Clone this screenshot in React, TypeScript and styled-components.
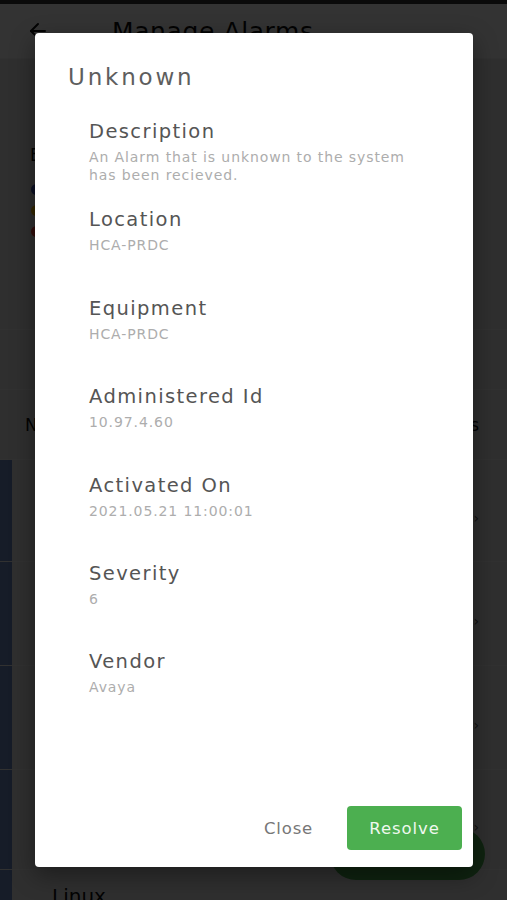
import { ArrowLeft } from "lucide-react";
import styled, { createGlobalStyle } from "styled-components";

const GlobalStyle = createGlobalStyle`
  html, body {
    margin: 0;
    padding: 0;
    background: #0a0a0a;
  }
  body {
    font-family: "DejaVu Sans", "Noto Sans", sans-serif;
  }
`;

const Screen = styled.div`
  position: relative;
  width: 507px;
  height: 900px;
  overflow: hidden;
  background: #ececec;
`;

const StatusStrip = styled.div`
  height: 4px;
  background: #333;
`;

const Header = styled.header`
  height: 54px;
  background: #fff;
  border-bottom: 1px solid #f6f6f6;
  display: flex;
  align-items: center;
  gap: 62px;
  padding-left: 26px;
  color: #111;
`;

const HeaderTitle = styled.h1`
  margin: 0;
  font-size: 25px;
  font-weight: 400;
  letter-spacing: 0.6px;
`;

const Summary = styled.section`
  height: 271px;
  border-bottom: 1px solid #f6f6f6;
  padding: 86px 0 0 30px;
  box-sizing: border-box;
  color: #111;
`;

const SummaryTitle = styled.div`
  font-size: 17px;
  margin-bottom: 17px;
`;

const Legend = styled.ul`
  list-style: none;
  margin: 0;
  padding: 0 0 0 1px;
  display: flex;
  flex-direction: column;
  gap: 6px;
`;

const LegendItem = styled.li`
  display: flex;
  align-items: center;
  gap: 8px;
  font-size: 13px;
`;

const Dot = styled.span<{ $color: string }>`
  width: 11px;
  height: 11px;
  border-radius: 50%;
  background: ${(p) => p.$color};
`;

const Filters = styled.div`
  height: 59px;
  border-bottom: 1px solid #f6f6f6;
`;

const TableHead = styled.div`
  height: 69px;
  border-bottom: 1px solid #f6f6f6;
  display: flex;
  align-items: center;
  justify-content: space-between;
  padding: 0 28px 0 25px;
  font-size: 17px;
  color: #111;
`;

const Row = styled.div<{ $height: number }>`
  height: ${(p) => p.$height}px;
  border-bottom: 1px solid #f6f6f6;
  display: flex;
`;

const RowMarker = styled.div`
  width: 12px;
  background: #6f8bc6;
`;

const RowBody = styled.div`
  flex: 1;
  display: flex;
  align-items: flex-start;
  justify-content: space-between;
  padding: 14px 28px 0 40px;
  font-size: 20px;
  color: #111;
`;

const RowEnd = styled.span`
  align-self: center;
  font-size: 14px;
  color: #555;
`;

const Fab = styled.button`
  position: absolute;
  left: 330px;
  top: 828px;
  width: 155px;
  height: 52px;
  border: none;
  border-radius: 26px;
  background: #4caf50;
  color: #fff;
  font-size: 16px;
  font-family: inherit;
`;

const Overlay = styled.div`
  position: absolute;
  inset: 0;
  background: rgba(0, 0, 0, 0.8);
  padding: 33px 34px 33px 35px;
  display: flex;
`;

const Dialog = styled.div`
  flex: 1;
  background: #fff;
  border-radius: 4px;
  display: flex;
  flex-direction: column;
  box-shadow: 0 8px 24px rgba(0, 0, 0, 0.4);
`;

const DialogTitle = styled.h2`
  margin: 0;
  padding: 30px 0 0 33px;
  font-size: 23px;
  line-height: 28px;
  font-weight: 400;
  letter-spacing: 2.8px;
  color: #5e5e5e;
`;

const Fields = styled.dl`
  flex: 1;
  margin: 0;
  padding: 29px 0 0 54px;
`;

const Field = styled.div`
  height: 88.4px;
`;

const Label = styled.dt`
  font-size: 19.5px;
  line-height: 24px;
  letter-spacing: 1.4px;
  color: #555;
`;

const Value = styled.dd`
  margin: 4px 0 0;
  font-size: 14px;
  line-height: 18px;
  letter-spacing: 0.9px;
  color: #adadad;
  max-width: 330px;
`;

const Actions = styled.div`
  display: flex;
  justify-content: flex-end;
  align-items: center;
  gap: 18px;
  padding: 0 11px 17px 0;
`;

const TextButton = styled.button`
  border: none;
  background: none;
  padding: 0 16px;
  height: 44px;
  font-family: inherit;
  font-size: 16.5px;
  letter-spacing: 0.8px;
  color: #777;
`;

const PrimaryButton = styled.button`
  border: none;
  border-radius: 4px;
  background: #4caf50;
  width: 115px;
  height: 44px;
  font-family: inherit;
  font-size: 16.5px;
  letter-spacing: 0.9px;
  color: #eef8ee;
`;

const details = [
  {
    label: "Description",
    value: "An Alarm that is unknown to the system has been recieved.",
  },
  { label: "Location", value: "HCA-PRDC" },
  { label: "Equipment", value: "HCA-PRDC" },
  { label: "Administered Id", value: "10.97.4.60" },
  { label: "Activated On", value: "2021.05.21 11:00:01" },
  { label: "Severity", value: "6" },
  { label: "Vendor", value: "Avaya" },
];

const rows = [
  { name: "Unknown", height: 101 },
  { name: "Unknown", height: 103 },
  { name: "Unknown", height: 103 },
  { name: "Unknown", height: 99 },
  { name: "Linux", height: 60 },
];

export default function App() {
  return (
    <>
      <GlobalStyle />
      <Screen>
        <StatusStrip />
        <Header>
          <ArrowLeft size={24} strokeWidth={2} />
          <HeaderTitle>Manage Alarms</HeaderTitle>
        </Header>
        <Summary>
          <SummaryTitle>Event Summary</SummaryTitle>
          <Legend>
            <LegendItem>
              <Dot $color="#3f51b5" />
              Minor
            </LegendItem>
            <LegendItem>
              <Dot $color="#ffc107" />
              Major
            </LegendItem>
            <LegendItem>
              <Dot $color="#f44336" />
              Critical
            </LegendItem>
          </Legend>
        </Summary>
        <Filters />
        <TableHead>
          <span>Name</span>
          <span>s</span>
        </TableHead>
        {rows.map((r, i) => (
          <Row key={i} $height={r.height}>
            <RowMarker />
            <RowBody>
              <span>{r.name}</span>
              <RowEnd>›</RowEnd>
            </RowBody>
          </Row>
        ))}
        <Fab>Add</Fab>
        <Overlay>
          <Dialog>
            <DialogTitle>Unknown</DialogTitle>
            <Fields>
              {details.map((d) => (
                <Field key={d.label}>
                  <Label>{d.label}</Label>
                  <Value>{d.value}</Value>
                </Field>
              ))}
            </Fields>
            <Actions>
              <TextButton>Close</TextButton>
              <PrimaryButton>Resolve</PrimaryButton>
            </Actions>
          </Dialog>
        </Overlay>
      </Screen>
    </>
  );
}
